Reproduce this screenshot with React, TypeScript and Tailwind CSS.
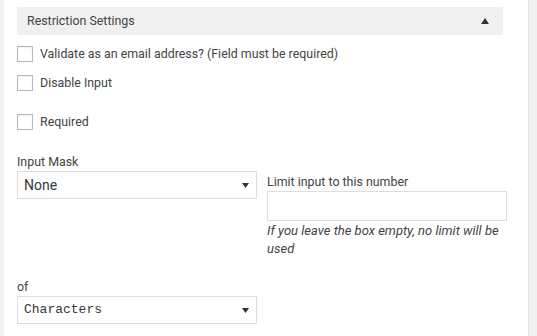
const Checkbox = ({ label, className }: { label: string; className?: string }) => (
  <label className={`flex items-center gap-[7px] ${className ?? ""}`}>
    <span className="block h-4 w-4 border border-[#b4b9be] bg-white shadow-[inset_0_1px_2px_rgba(0,0,0,0.07)]" />
    <span className="text-[12.4px] leading-4 text-[#444]">{label}</span>
  </label>
);

const Select = ({ value, mono }: { value: string; mono?: boolean }) => (
  <div className="flex h-[28px] w-[240px] items-center justify-between border border-[#ddd] bg-white pl-[6px] pr-[7px]">
    <span
      className={
        mono
          ? "text-[13px] text-[#32373c] [font-family:'Liberation_Mono',monospace]"
          : "text-[14px] text-[#32373c]"
      }
    >
      {value}
    </span>
    <svg width="7" height="5" viewBox="0 0 7 5">
      <path d="M0 0h7L3.5 5z" fill="#333" />
    </svg>
  </div>
);

export default function App() {
  return (
    <div className="flex h-[336px] w-[537px] bg-[#f1f1f1] [font-family:Roboto,'Liberation_Sans',sans-serif]">
      <div className="w-[4px] bg-[#f1f1f1]" />
      <div className="w-[525px] border-r border-[#e5e5e5] bg-white pl-[13px] pt-[7px]">
        <div className="flex h-[28px] w-[486px] items-center justify-between bg-[#f0f0f0] pl-[10px] pr-[14px]">
          <span className="text-[12.4px] text-[#444]">Restriction Settings</span>
          <svg width="8" height="6" viewBox="0 0 8 6">
            <path d="M0 6h8L4 0z" fill="#333" />
          </svg>
        </div>

        <Checkbox label="Validate as an email address? (Field must be required)" className="mt-[11px]" />
        <Checkbox label="Disable Input" className="mt-[13px]" />
        <Checkbox label="Required" className="mt-[23px]" />

        <div className="mt-[23px] flex gap-[10px]">
          <div className="flex flex-col">
            <span className="text-[12.4px] leading-[18px] text-[#444]">Input Mask</span>
            <Select value="None" />
          </div>
          <div className="flex flex-col pt-[20px]">
            <span className="text-[12.4px] leading-[18px] text-[#444]">Limit input to this number</span>
            <div className="h-[30px] w-[240px] border border-[#ddd] bg-white" />
            <p className="mt-[1px] w-[240px] text-[13px] italic leading-[18px] text-[#444]">
              If you leave the box empty, no limit will be used
            </p>
          </div>
        </div>

        <div className="mt-[20px] flex flex-col">
          <span className="text-[12.4px] leading-[18px] text-[#444]">of</span>
          <Select value="Characters" mono />
        </div>
      </div>
    </div>
  );
}
